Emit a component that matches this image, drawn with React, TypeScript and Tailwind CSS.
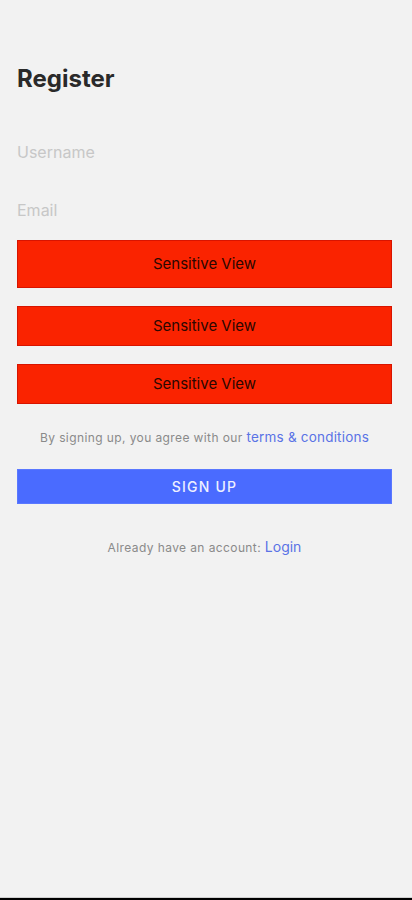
import React, { useState } from "react";

const SensitiveView = ({ height }: { height: string }) => (
  <div
    className={`flex w-full items-center justify-center border border-[#d81400] bg-[#fa2300] text-[15px] text-[#2b0700] ${height}`}
  >
    Sensitive View
  </div>
);

export default function App() {
  const [form, setForm] = useState({ username: "", email: "" });

  const handleChange = (e: React.ChangeEvent<HTMLInputElement>) => {
    setForm({ ...form, [e.target.name]: e.target.value });
  };

  return (
    <div
      className="flex h-[900px] w-full flex-col bg-[#f2f2f2]"
      style={{ fontFamily: "Inter, 'Noto Sans', sans-serif" }}
    >
      <main className="flex flex-1 flex-col pl-[17px] pr-[20px] pt-[63px]">
        <h1 className="h-8 text-[24px] font-bold leading-8 text-[#2a2a2a]">Register</h1>

        <input
          name="username"
          value={form.username}
          onChange={handleChange}
          placeholder="Username"
          className="mt-[37px] h-10 w-full bg-transparent text-[16px] text-[#333] outline-none placeholder:text-[#c7c7c7]"
        />
        <input
          name="email"
          value={form.email}
          onChange={handleChange}
          placeholder="Email"
          className="mt-[18px] h-10 w-full bg-transparent text-[16px] text-[#333] outline-none placeholder:text-[#c7c7c7]"
        />

        <div className="mt-[10px] flex flex-col gap-[18px]">
          <SensitiveView height="h-[48px]" />
          <SensitiveView height="h-[40px]" />
          <SensitiveView height="h-[40px]" />
        </div>

        <p className="mt-[23px] h-5 text-center text-[12px] leading-5 tracking-[0.4px] text-[#8a8a8a]">
          By signing up, you agree with our{" "}
          <span className="text-[13.5px] tracking-[0.2px] text-[#5a73e6]">terms &amp; conditions</span>
        </p>

        <button className="mt-[22px] h-[35px] w-full border border-[#5a78ff] bg-[#4a6bff] text-[14px] font-medium tracking-[1.2px] text-[#eef0ff]">
          SIGN UP
        </button>

        <p className="mt-[33px] h-5 text-center text-[12px] leading-5 tracking-[0.4px] text-[#8a8a8a]">
          Already have an account:{" "}
          <span className="text-[14px] tracking-normal text-[#5a73e6]">Login</span>
        </p>
      </main>
      <div className="h-px w-full bg-[#cfcfcf]" />
      <div className="h-[2px] w-full bg-black" />
    </div>
  );
}
